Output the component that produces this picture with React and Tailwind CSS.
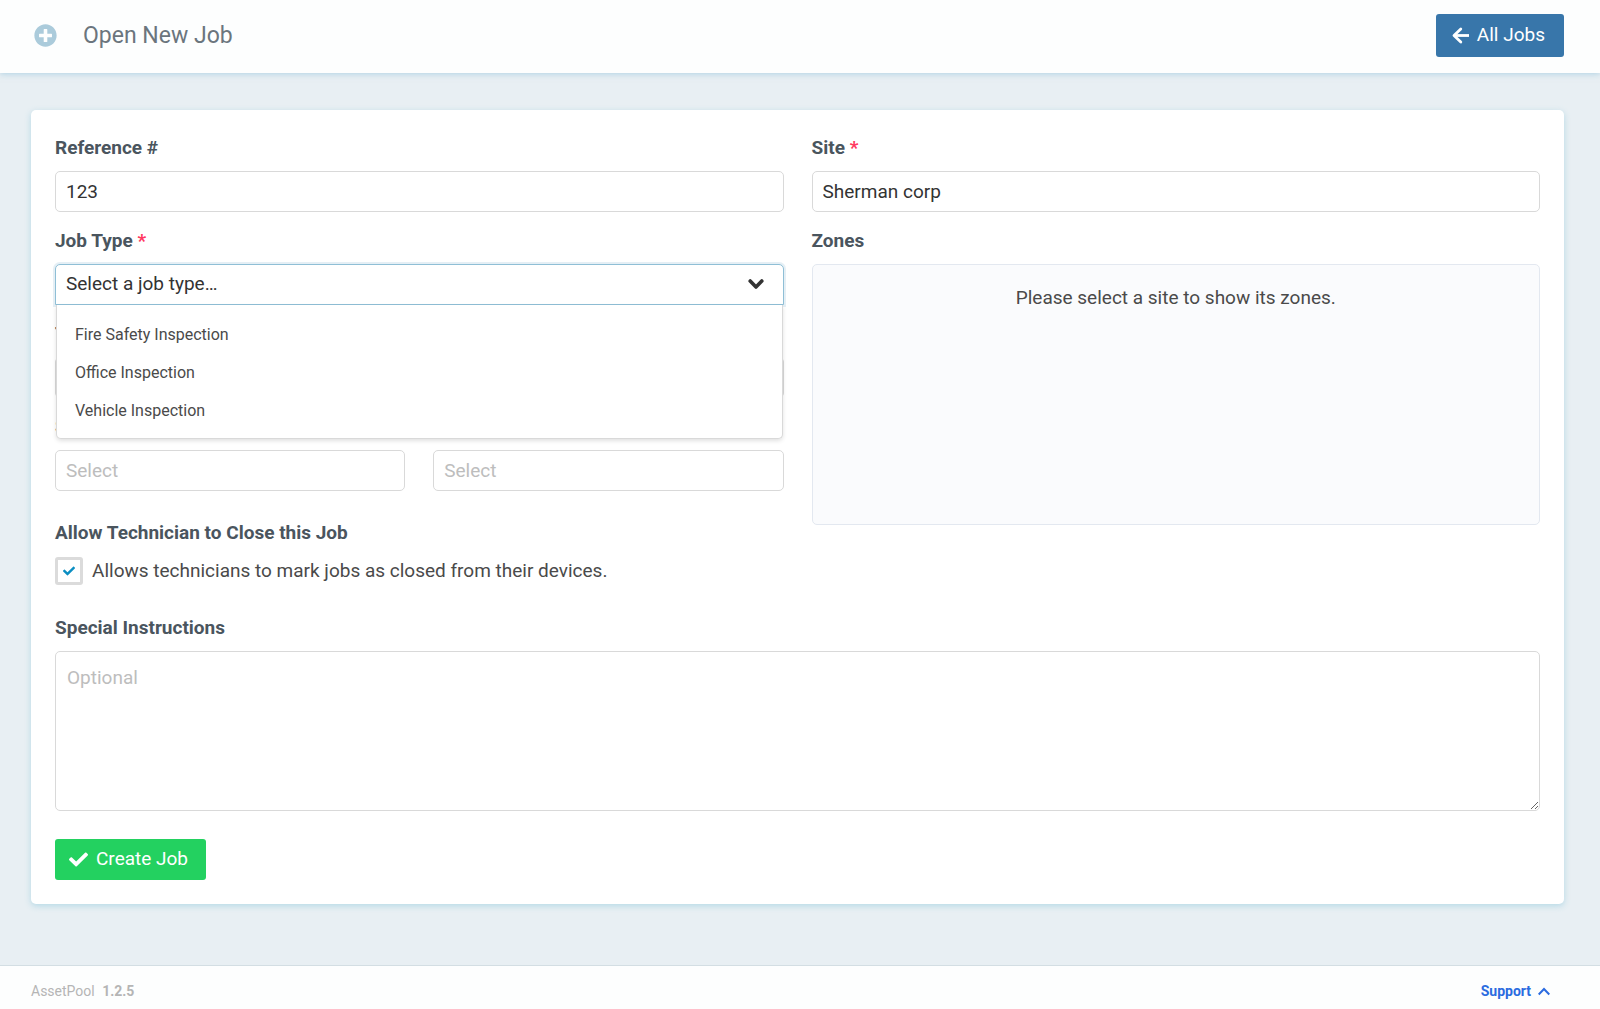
import { useState } from 'react';
import { FaPlusCircle, FaCheck } from 'react-icons/fa';

const jobTypes = ['Fire Safety Inspection', 'Office Inspection', 'Vehicle Inspection'];

const labelClass = 'block pb-[9px] text-[19px] leading-7 font-bold text-[#4a555e]';
const inputClass = 'block w-full h-[41px] px-2.5 rounded-[5px] border border-[#d9d9d9] bg-white text-[19px] text-[#333] placeholder-[#bdbdbd] outline-none';

function Field({ id, label, required, children }) {
  return (
    <div>
      <label htmlFor={id} className={labelClass}>{label}{required && <span className="text-[#ff3860]"> *</span>}</label>
      {children}
    </div>
  );
}

export default function App() {
  const [reference, setReference] = useState('123');
  const [site, setSite] = useState('Sherman corp');
  const [jobType, setJobType] = useState('');
  const [open, setOpen] = useState(true);
  const [allowClose, setAllowClose] = useState(true);

  const pick = (t) => { setJobType(t); setOpen(false); };

  return (
    <div className="flex min-h-screen flex-col bg-[#e8eff3] font-[Roboto,sans-serif] text-[#4a4a4a]">
      <header className="relative flex items-center justify-between bg-[#fdfefe] pb-4 pl-[34px] pr-9 pt-3.5 shadow-[0_1px_6px_rgba(130,185,215,0.55)]">
        <div className="flex items-center gap-[26px]">
          <FaPlusCircle className="size-[23px] text-[#abcbdb]" />
          <h1 className="text-[23px] leading-8 text-[#6b757d]">Open New Job</h1>
        </div>
        <a href="#jobs" className="flex h-[43px] items-center gap-2 rounded-[3px] bg-[#3876aa] pl-4 pr-[19px] text-[19px] text-white">
          <svg className="h-[17px] w-[17px]" viewBox="0 0 17 17" fill="none" stroke="currentColor" strokeWidth="2.8" strokeLinejoin="round"><path d="M17 8.500H2.500" /><path strokeLinecap="round" d="M8.800 2L2 8.500l6.800 6.500" /></svg>
          All Jobs
        </a>
      </header>

      <main className="grow pb-15 pl-[31px] pr-9 pt-[37px]">
        <form className="rounded-[5px] bg-white p-6 shadow-[0_2px_6px_rgba(120,190,215,0.45)]" onSubmit={(e) => e.preventDefault()}>
          <div className="grid grid-cols-2 gap-7">
            <div className="flex flex-col gap-[15px]">
              <Field id="reference" label="Reference #">
                <input id="reference" className={inputClass} value={reference} onChange={(e) => setReference(e.target.value)} />
              </Field>
              <div className="relative">
                <Field id="job-type" label="Job Type " required>
                  <div className="relative">
                    <select
                      id="job-type"
                      value={jobType}
                      onMouseDown={(e) => { e.preventDefault(); setOpen(!open); }}
                      onChange={(e) => setJobType(e.target.value)}
                      className="block h-[41px] w-full appearance-none rounded-t-[5px] border border-[#8fbfd6] bg-white px-2.5 text-[19px] text-[#333] shadow-[0_0_0_2px_rgba(151,193,214,0.25)] outline-none"
                    >
                      <option value="">Select a job type…</option>
                      {jobTypes.map(t => <option key={t}>{t}</option>)}
                    </select>
                    <svg className="pointer-events-none absolute right-5 top-3.5 h-3 w-4" viewBox="0 0 16 12" fill="none" stroke="#333" strokeWidth="3.600" strokeLinecap="round" strokeLinejoin="round"><path d="M2.200 3L8 9l5.800-6" /></svg>
                  </div>
                </Field>
                {open && (
                  <ul className="absolute inset-x-px top-full z-10 rounded-b-[5px] border border-t-0 border-[#d9d9d9] bg-white pb-2 pt-[11px] shadow-[0_2px_4px_rgba(0,0,0,0.12)]">
                    {jobTypes.map(t => (
                      <li key={t}><button type="button" onClick={() => pick(t)} className="block h-[38px] w-full px-[18px] text-left text-base">{t}</button></li>
                    ))}
                  </ul>
                )}
              </div>
              <Field id="technician" label="Technician">
                <input id="technician" className={inputClass} />
              </Field>
              <Field id="start" label="Schedule">
                <div className="grid grid-cols-2 gap-7">
                  <input id="start" className={inputClass} placeholder="Select" />
                  <input aria-label="End" className={inputClass} placeholder="Select" />
                </div>
              </Field>
              <div className="pt-[13px]">
                <h2 className={labelClass}>Allow Technician to Close this Job</h2>
                <label className="flex items-center gap-[9px] pt-px text-[19px] leading-7">
                  <span className="relative size-7">
                    <input type="checkbox" checked={allowClose} onChange={(e) => setAllowClose(e.target.checked)} className="block size-7 appearance-none rounded-[3px] border-[3px] border-[#dbdbdb] bg-white" />
                    {allowClose && <FaCheck className="pointer-events-none absolute left-2 top-2 size-3 text-[#0b8ec2]" />}
                  </span>
                  Allows technicians to mark jobs as closed from their devices.
                </label>
              </div>
            </div>

            <div className="flex flex-col gap-[15px]">
              <Field id="site" label="Site" required>
                <input id="site" className={inputClass} value={site} onChange={(e) => setSite(e.target.value)} />
              </Field>
              <div>
                <h2 className={labelClass}>Zones</h2>
                <div className="h-[261px] rounded-[5px] border border-[#e3e8f0] bg-[#fafbfd] pt-[19px] text-center text-[19px] leading-7">Please select a site to show its zones.</div>
              </div>
            </div>
          </div>

          <div className="pt-[29px]">
            <label htmlFor="instructions" className={labelClass}>Special Instructions</label>
            <textarea id="instructions" placeholder="Optional" className="block h-40 w-full rounded-[5px] border border-[#d9d9d9] bg-white px-[11px] py-3 text-[19px] leading-7 placeholder-[#bdbdbd] outline-none" />
          </div>

          <button type="submit" className="mt-7 flex h-[41px] items-center gap-2 rounded-[3px] bg-[#23d160] pl-3.5 pr-[18px] text-[19px] text-white">
            <FaCheck className="size-[19px]" />
            Create Job
          </button>
        </form>
      </main>

      <footer className="flex items-center justify-between border-t border-[#d3dee3] bg-[#fdfefe] pb-2 pl-[31px] pr-[50px] pt-[15px] text-sm text-[#b5b5b5]">
        <p>AssetPool <strong className="ml-1 font-bold">1.2.5</strong></p>
        <a href="#support" className="flex items-center gap-[7px] font-bold text-[#2b6be0]">
          Support
          <svg className="h-3 w-3" viewBox="0 0 12 12" fill="none" stroke="currentColor" strokeWidth="2"><path d="M.7 9.500L6 4l5.300 5.500" /></svg>
        </a>
      </footer>
    </div>
  );
}
